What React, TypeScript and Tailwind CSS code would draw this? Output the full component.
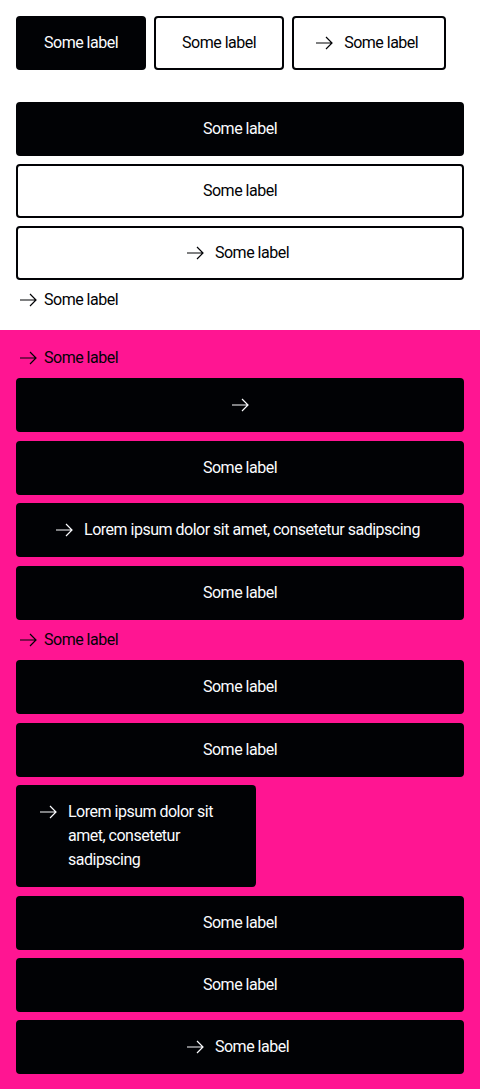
import React from 'react';

const Arrow = () => (
  <svg viewBox="0 0 24 24" className="w-6 h-6 shrink-0" fill="none" stroke="currentColor" strokeWidth={1.2}>
    <path d="M4 12h16M14 6l6 6-6 6" />
  </svg>
);

type Variant = 'primary' | 'secondary';

interface BtnProps {
  label?: string;
  icon?: boolean;
  variant?: Variant;
  full?: boolean;
  left?: boolean;
}

const Btn: React.FC<BtnProps> = ({ label, icon, variant = 'primary', full, left }) => {
  const colors =
    variant === 'primary'
      ? 'bg-[#010205] border-[#010205] text-[#fbfcff]'
      : 'bg-white border-[#010205] text-[#010205]';
  const pad = icon && label ? 'pl-[18px] pr-[26px]' : icon ? 'px-[13px]' : 'px-[26px]';
  return (
    <button
      className={`${colors} ${pad} ${full ? 'flex w-full' : 'inline-flex whitespace-nowrap'} ${
        left ? 'justify-start text-left' : 'justify-center'
      } items-start gap-2 border-2 rounded-[4px] py-[13px] text-base leading-6 tracking-[-0.5px]`}
    >
      {icon && <Arrow />}
      {label && <span>{label}</span>}
    </button>
  );
};

const Link: React.FC<{ label: string }> = ({ label }) => (
  <a className="flex items-center gap-1 text-[#010205] text-base leading-6 tracking-[-0.5px]">
    <Arrow />
    <span>{label}</span>
  </a>
);

const lorem = 'Lorem ipsum dolor sit amet, consetetur sadipscing';

export default function App() {
  return (
    <div className="w-[480px] min-h-[1089px] font-['Roboto',sans-serif]">
      {/* Light section */}
      <div className="bg-white p-4 pb-[18px]">
        <div className="flex gap-2">
          <Btn label="Some label" />
          <Btn label="Some label" variant="secondary" />
          <Btn label="Some label" variant="secondary" icon />
        </div>
        <div className="flex flex-col gap-2 mt-8">
          <Btn label="Some label" full />
          <Btn label="Some label" variant="secondary" full />
          <Btn label="Some label" variant="secondary" icon full />
          <Link label="Some label" />
        </div>
      </div>

      {/* Pink section */}
      <div className="bg-[#ff1592] p-4 flex flex-col gap-[8.4px]">
        <Link label="Some label" />
        <Btn icon full />
        <Btn label="Some label" full />
        <Btn label={lorem} icon full />
        <Btn label="Some label" full />
        <Link label="Some label" />
        <Btn label="Some label" full />
        <Btn label="Some label" full />
        <div className="w-[240px]">
          <Btn label={lorem} icon full left />
        </div>
        <Btn label="Some label" full />
        <Btn label="Some label" full />
        <Btn label="Some label" icon full />
      </div>
    </div>
  );
}
